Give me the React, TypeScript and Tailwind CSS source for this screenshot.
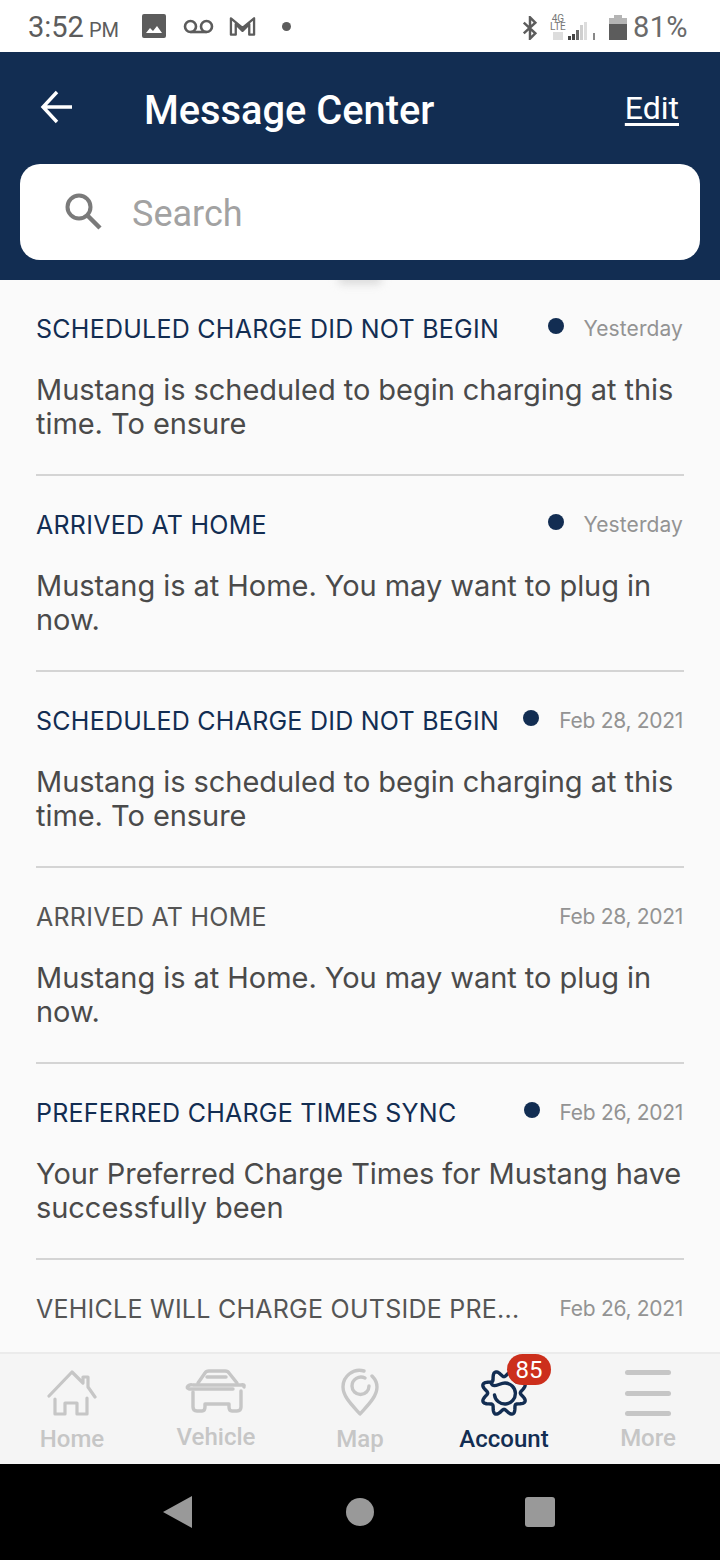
import React from "react";

const rows = [
  { t: "SCHEDULED CHARGE DID NOT BEGIN", d: "Yesterday", b: "Mustang is scheduled to begin charging at this time. To ensure", unread: true },
  { t: "ARRIVED AT HOME", d: "Yesterday", b: "Mustang is at Home. You may want to plug in now.", unread: true },
  { t: "SCHEDULED CHARGE DID NOT BEGIN", d: "Feb 28, 2021", b: "Mustang is scheduled to begin charging at this time. To ensure", unread: true },
  { t: "ARRIVED AT HOME", d: "Feb 28, 2021", b: "Mustang is at Home. You may want to plug in now.", unread: false },
  { t: "PREFERRED CHARGE TIMES SYNC", d: "Feb 26, 2021", b: "Your Preferred Charge Times for Mustang have successfully been", unread: true },
  { t: "VEHICLE WILL CHARGE OUTSIDE PRE...", d: "Feb 26, 2021", b: "", unread: false },
];

function gearPath() {
  const pts: string[] = [];
  for (let i = 0; i < 160; i++) {
    const a = (i / 160) * Math.PI * 2 + 0.39;
    const r = 19.5 + 3.2 * Math.cos(8 * (a - 0.39));
    pts.push(`${(24 + r * Math.cos(a)).toFixed(2)} ${(25 + r * Math.sin(a)).toFixed(2)}`);
  }
  return "M" + pts.join("L") + "z";
}

function Row({ r }: { r: (typeof rows)[number] }) {
  return (
    <div className="mx-9 h-[196px] shrink-0 border-b-2 border-[#d4d4d4] pt-[35px]">
      <div className="flex h-[28px] items-center">
        <span className={`min-w-0 flex-1 whitespace-nowrap text-[25px] leading-[28px] tracking-[0.25px] ${r.unread ? "text-[#122d52]" : "text-[#555555]"}`}>{r.t}</span>
        {r.unread && <span className="mr-5 mb-[6px] h-[16px] w-[16px] rounded-full bg-[#122d52]" />}
        <span className={`mr-[1px] whitespace-nowrap text-[21px] leading-[28px] text-[#939393] ${r.d === "Yesterday" ? "tracking-[0.1px]" : "tracking-[-0.3px]"}`}>{r.d}</span>
      </div>
      <p className="mt-[30px] text-[29px] leading-[34px] tracking-[-0.05px] text-[#4a4a4a]">{r.b}</p>
    </div>
  );
}

function Tab({ label, active, children, labelClass }: { label: string; active?: boolean; children: React.ReactNode; labelClass?: string }) {
  return (
    <div className="flex w-[144px] flex-col items-center">
      <div className="flex h-[71px] items-start justify-center">{children}</div>
      <span className={`whitespace-nowrap font-['Roboto',sans-serif] text-[24px] font-medium leading-[28px] ${active ? "text-[#122d52]" : "text-[#c6c6c6]"} ${labelClass ?? ""}`}>{label}</span>
    </div>
  );
}

export default function App() {
  return (
    <div className="flex h-[1560px] w-[720px] flex-col overflow-hidden bg-[#fafafa] font-['Inter',sans-serif]">
      {/* status bar */}
      <div className="flex h-[52px] shrink-0 items-center bg-white pl-[28px] pr-[32px] pt-[3px] font-['Roboto',sans-serif] text-[#5c5c5c]">
        <span className="text-[29px] leading-none">3:52</span>
        <span className="ml-[5px] mt-[5px] text-[20px] leading-none">PM</span>
        <svg className="ml-[23px] -mt-[3px]" width="24" height="24" viewBox="0 0 24 24"><path fill="#5c5c5c" fillRule="evenodd" d="M2 0h20a2 2 0 0 1 2 2v20a2 2 0 0 1-2 2H2a2 2 0 0 1-2-2V2a2 2 0 0 1 2-2zM4 19h16l-5-7-4 5-3-3z" /></svg>
        <svg className="ml-[17px] -mt-[3px]" width="31" height="15" viewBox="0 0 31 15" fill="none" stroke="#5c5c5c" strokeWidth="2.6"><circle cx="7.5" cy="7.5" r="5.5" /><circle cx="23.5" cy="7.5" r="5.5" /><path d="M7.5 13h16" /></svg>
        <svg className="ml-[15px] -mt-[3px]" width="27" height="22" viewBox="0 0 28 22" fill="none" stroke="#5c5c5c" strokeWidth="2.4" strokeLinejoin="round"><path d="M2 20V3l12 10L26 3v17h-5V9l-7 7-7-7v11z" /></svg>
        <span className="ml-[26px] -mt-[3px] h-[9px] w-[9px] rounded-full bg-[#5c5c5c]" />
        <svg className="ml-auto" width="16" height="24" viewBox="0 0 18 26" fill="none" stroke="#5c5c5c" strokeWidth="2.8"><path d="M2 7l13 12-6 6V1l6 6L2 19" /></svg>
        <div className="ml-[13px] -mt-[1px] flex w-[14px] flex-col items-center text-[10px] leading-[8px] text-[#777777]"><span>4G</span><span>LTE</span><span className="mt-[1px] h-[8px] w-[10px] bg-[#dddddd]" /></div>
        <svg className="ml-[3px] mt-[6px]" width="28" height="20" viewBox="0 0 28 20"><rect x="0" y="15" width="3" height="4" fill="#444" /><rect x="4" y="13" width="3" height="6" fill="#444" /><rect x="8" y="9" width="3" height="10" fill="#666" /><rect x="12" y="4" width="3" height="15" fill="#cfcfcf" /><rect x="16" y="1" width="3" height="18" fill="#dddddd" /><rect x="25" y="12" width="2" height="7" fill="#888" /></svg>
        <svg className="ml-[13px] -mt-[1px]" width="18" height="25" viewBox="0 0 18 25"><path fill="#b5b5b5" d="M5 0h8v3H5z" /><path fill="#b5b5b5" d="M0 3h18v6H0z" /><path fill="#5c5c5c" d="M0 9h18v16H0z" /></svg>
        <span className="ml-[6px] text-[29px] leading-none tracking-[0.4px] text-[#6a6a6a]">81%</span>
      </div>

      {/* header */}
      <div className="h-[228px] shrink-0 bg-[#122d52] px-5">
        <div className="flex h-[112px] items-center">
          <svg className="ml-[20px] -mt-[2px]" width="34" height="34" viewBox="0 0 34 34" fill="none" stroke="white" strokeWidth="3.4"><path d="M32 17H3M17 2L3 17l14 15" /></svg>
          <span className="ml-[70px] mt-[5px] font-['Roboto',sans-serif] text-[39.8px] font-medium leading-none text-white">Message Center</span>
          <span className="ml-auto mr-[21px] font-['Roboto',sans-serif] text-[32px] leading-none text-white underline underline-offset-[4px]">Edit</span>
        </div>
        <div className="flex h-[96px] items-center rounded-[20px] bg-white pl-[44px]">
          <svg className="-mt-[2px]" width="38" height="38" viewBox="0 0 38 38" fill="none" stroke="#7a7a7a"><circle cx="15" cy="15" r="11.5" strokeWidth="4" /><path d="M23.5 23.5L36 36" strokeWidth="4.5" /></svg>
          <span className="ml-[30px] mt-[4px] font-['Roboto',sans-serif] text-[36px] leading-none text-[#a2a2a2]">Search</span>
        </div>
      </div>

      {/* list */}
      <div className="relative flex min-h-0 flex-1 flex-col overflow-hidden bg-[#fafafa]">
        <div className="absolute left-[338px] top-[-6px] h-[10px] w-[44px] rounded-full bg-[#d8d8d8] blur-[4px]" />
        {rows.map((r, i) => (
          <Row key={i} r={r} />
        ))}
      </div>

      {/* tab bar */}
      <div className="flex h-[112px] shrink-0 border-t-2 border-[#ebebeb] bg-[#f5f5f5]">
        <Tab label="Home">
          <svg className="mt-[16px]" width="50" height="46" viewBox="0 0 50 46" fill="none" stroke="#c6c6c6" strokeWidth="3.2" strokeLinejoin="round" strokeLinecap="round"><path d="M2 26L25 2l11 11V7h5v10l7 10" /><path d="M8 29v15h10V33h12v11h10V28" /></svg>
        </Tab>
        <Tab label="Vehicle" labelClass="-mt-[2px]">
          <svg className="mt-[14px]" width="62" height="46" viewBox="0 0 62 46" fill="none" stroke="#c6c6c6" strokeWidth="3.4" strokeLinejoin="round" strokeLinecap="round"><path d="M13 15L20 5Q21 3 24 3H40Q43 3 44 5L52 15" /><path d="M48 21H4Q1 20 3 18Q5 16 8 17H56Q60 16 59 19" /><path d="M22 9H41" /><path d="M8 24V39Q8 43 12 43H17Q20 43 20 39V36H44V39Q44 43 47 43H52Q56 43 56 39V23" /></svg>
        </Tab>
        <Tab label="Map">
          <svg className="mt-[14px]" width="38" height="48" viewBox="0 0 38 48" fill="none" stroke="#c6c6c6" strokeWidth="3.4" strokeLinecap="round" strokeLinejoin="round"><path d="M23 3A16.5 16.5 0 0 0 2 19C2 29 12 38 19 46C26 38 36 29 36 19C36 14 34 11 31 8" /><path d="M24 10A9 9 0 0 0 11 18A8.5 8.5 0 0 0 28 18" /></svg>
        </Tab>
        <Tab label="Account" active>
          <div className="relative mt-[14px] h-[48px] w-[48px]">
            <svg width="48" height="50" viewBox="0 0 48 50" fill="none" stroke="#122d52" strokeWidth="3.4" strokeLinejoin="round" strokeLinecap="round"><path d={gearPath()} /><path d="M11 15C14 21 19 15 25 15A10.5 10.5 0 1 1 14.5 27" /></svg>
            <span className="absolute left-[27px] top-[-14px] flex h-[31px] w-[44px] items-center justify-center rounded-full bg-[#cc2f1c] font-['Roboto',sans-serif] text-[24px] leading-none text-white">85</span>
          </div>
        </Tab>
        <Tab label="More" labelClass="-mt-[1px]">
          <div className="mt-[16px] flex h-[46px] w-[46px] flex-col justify-between">
            <span className="h-[5px] rounded-full bg-[#c6c6c6]" />
            <span className="h-[5px] rounded-full bg-[#c6c6c6]" />
            <span className="h-[5px] rounded-full bg-[#c6c6c6]" />
          </div>
        </Tab>
      </div>

      {/* android nav */}
      <div className="flex h-[96px] shrink-0 items-center bg-black pl-[163px]">
        <svg width="30" height="34" viewBox="0 0 30 34"><path fill="#999" d="M0 17L29 1v32z" /></svg>
        <span className="ml-[153px] h-[28px] w-[28px] rounded-full bg-[#999]" />
        <span className="ml-[151px] h-[30px] w-[30px] rounded-[3px] bg-[#999]" />
      </div>
    </div>
  );
}
